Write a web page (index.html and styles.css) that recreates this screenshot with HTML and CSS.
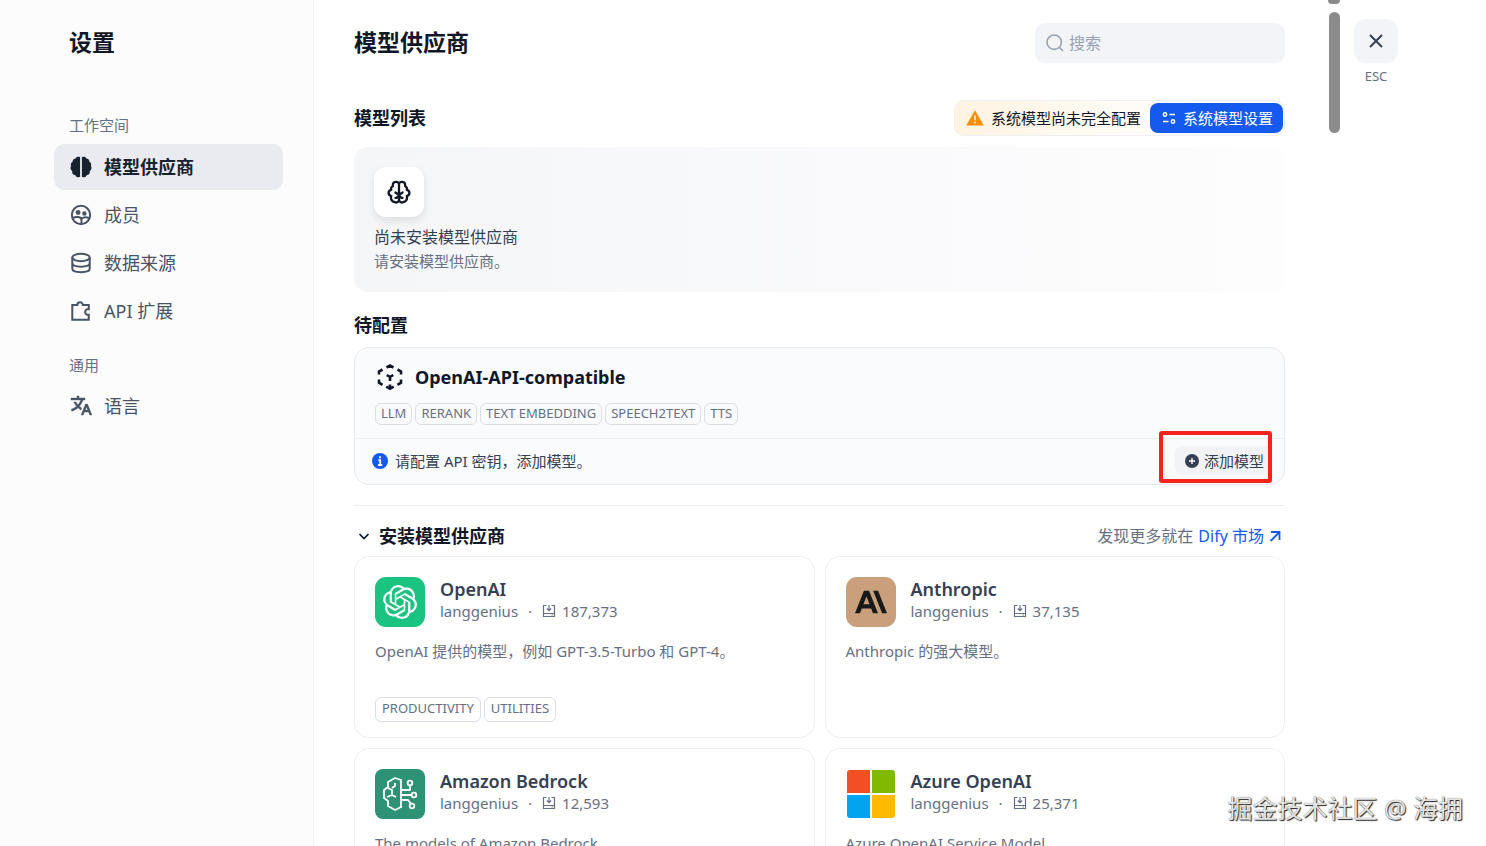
FILE: index.html
```html
<!DOCTYPE html>
<html lang="zh-CN">
<head>
<meta charset="utf-8">
<meta name="viewport" content="width=device-width, initial-scale=1">
<title>设置</title>
<link rel="stylesheet" href="styles.css">
</head>
<body>
<svg class="defs" aria-hidden="true">
  <symbol id="install" viewBox="0 0 14 14"><path d="M4.500 1.500H1.500V12.500H12.500V1.500H9.500M1.500 9.500H12.500M7 1V6.500M4.800 4.500L7 6.700L9.200 4.500M9.500 11H10.800" fill="none" stroke="currentColor" stroke-width="1.200"/></symbol>
</svg>
<div class="app">
  <aside class="sidebar">
    <h1 class="title">设置</h1>
    <nav class="nav">
      <p class="nav-label">工作空间</p>
      <a class="nav-item active" href="#provider" aria-current="page">
        <svg class="nav-icon" viewBox="0 0 24 24" fill="currentColor"><path d="M11 1.300V22.700C9.500 23.600 6.500 23.500 5.600 20.600C3.400 20.600 2 18.700 2.500 16.500C.4 15.200 0 12.500 1.200 11C.3 8.800 1.200 7 2.900 6.200C2.700 4 4.300 2.800 5.800 3C6.800 .8 9.600 .3 11 1.300ZM13 1.300C14.400 .3 17.200 .8 18.200 3C19.700 2.800 21.300 4 21.100 6.200C22.800 7 23.700 8.800 22.800 11C24 12.500 23.600 15.200 21.500 16.500C22 18.700 20.600 20.600 18.400 20.600C17.500 23.500 14.500 23.600 13 22.700Z"/></svg>
        模型供应商</a>
      <a class="nav-item" href="#members">
        <svg class="nav-icon" viewBox="0 0 24 24" fill="none" stroke="currentColor" stroke-width="2.200"><circle cx="12" cy="12" r="10"/><path d="M3 15.500C6 13.500 12 13.500 12.500 17V22M12.500 16C15 14 18 14 21 15.500"/><circle cx="8.800" cy="9.200" r="1.600" fill="currentColor"/><circle cx="15.700" cy="10.300" r="1.300" fill="currentColor"/></svg>
        成员</a>
      <a class="nav-item" href="#data">
        <svg class="nav-icon" viewBox="0 0 24 24" fill="none" stroke="currentColor" stroke-width="2.200"><ellipse cx="12" cy="6" rx="9.500" ry="4"/><path d="M2.500 6V18C2.500 23.300 21.500 23.300 21.500 18V6M2.500 12C2.500 17.300 21.500 17.300 21.500 12"/></svg>
        数据来源</a>
      <a class="nav-item" href="#api">
        <svg class="nav-icon" viewBox="0 0 24 24" fill="none" stroke="currentColor" stroke-width="2.200"><path d="M2.500 5.500H8A3 3 0 1 1 14 5.500H20.500V10A3.200 3.200 0 1 0 20.500 16.200V21.500H2.500Z"/></svg>
        API 扩展</a>
      <p class="nav-label general">通用</p>
      <a class="nav-item" href="#language">
        <svg class="nav-icon" viewBox="1 1 22 22" fill="currentColor" stroke="currentColor" stroke-width=".4"><path d="M18.500 10L22.900 21H20.745L19.544 18H15.454L14.255 21H12.101L16.500 10H18.500ZM10 2V4H16V6L14.032 6C13.243 8.366 11.999 10.506 10.412 12.301C11.134 12.946 11.917 13.518 12.748 14.008L11.997 15.886C10.924 15.278 9.919 14.552 9 13.725C7.214 15.332 5.109 16.555 2.799 17.273L2.263 15.344C4.239 14.720 6.045 13.674 7.590 12.302C6.463 11.028 5.509 9.580 4.767 8H7.007C7.570 9.039 8.240 10.003 9 10.877C10.228 9.465 11.221 7.816 11.910 6H2V4H8V2H10ZM17.500 12.885L16.253 16H18.745L17.500 12.885Z"/></svg>
        语言</a>
    </nav>
  </aside>

  <main class="main">
    <header class="page-head">
      <h2 class="title">模型供应商</h2>
      <label class="search">
        <svg class="icon-18" viewBox="0 0 18 18" fill="none" stroke="currentColor" stroke-width="1.600"><circle cx="8.200" cy="8.200" r="7.200"/><path d="M13.300 13.300L17 17"/></svg>
        <input type="text" placeholder="搜索" aria-label="搜索">
      </label>
    </header>

    <div class="list-head">
      <h3 class="section-title">模型列表</h3>
      <div class="notice">
        <svg class="icon-18" viewBox="0 0 18 18"><path d="M9 1.200L17.800 16.500H.2Z" fill="#f79009"/><path d="M9 6.500V11.300M9 12.700V14.300" stroke="#fff6e8" stroke-width="1.600"/></svg>
        <span>系统模型尚未完全配置</span>
        <button class="primary" type="button">
          <svg class="icon-14" viewBox="0 0 14 14" fill="none" stroke="currentColor" stroke-width="1.400"><circle cx="3" cy="3.500" r="1.700"/><path d="M7.500 3.500H13M1 10.500H6.500"/><circle cx="11" cy="10.500" r="1.700"/></svg>
          系统模型设置</button>
      </div>
    </div>

    <section class="empty">
      <div class="empty-icon">
        <svg class="icon-22" viewBox="0 0 24 24" fill="none" stroke="currentColor" stroke-width="2.300" stroke-linecap="round" stroke-linejoin="round"><path d="M12 4.500C12 .8 5.800 .8 5.800 5V6.300C4 7 3.800 8.800 4.200 9.800C.8 10.500 .6 15 4.200 16C3.400 19 5 22 7.500 22C9 23 12 22.500 12 19.500ZM12 4.500C12 .8 18.200 .8 18.200 5V6.300C20 7 20.200 8.800 19.800 9.800C23.200 10.500 23.400 15 19.800 16C20.600 19 19 22 16.500 22C15 23 12 22.500 12 19.500M8.500 12.500C9.500 14 11 14 12 14C13 14 14.500 14 15.500 12.500M8.500 17.800C10 18 11.500 16.500 12 14.500C12.500 16.500 14 18 15.500 17.800"/></svg>
      </div>
      <p class="empty-title">尚未安装模型供应商</p>
      <p class="empty-text">请安装模型供应商。</p>
    </section>

    <h3 class="section-title pending">待配置</h3>
    <section class="provider">
      <div class="provider-body">
        <div class="provider-name">
          <svg class="icon-30" viewBox="-3 -2.500 30 30" fill="none" stroke="currentColor" stroke-width="2.600"><path d="M8.500 3L12 1L15.500 3M1 10V7L4.500 5M19.500 5L23 7V10M1 15V18.200L4.500 20.300M23 15V18.200L19.500 20.300M8.300 22.200L12 24.300L15.700 22.200M12 20V24M8.700 10.500L12 12.500L15.300 10.500M12 12.500V16.500"/></svg>
          <h4>OpenAI-API-compatible</h4>
        </div>
        <ul class="tags">
          <li>LLM</li><li>RERANK</li><li>TEXT EMBEDDING</li><li>SPEECH2TEXT</li><li>TTS</li>
        </ul>
      </div>
      <div class="provider-foot">
        <svg class="icon-16" viewBox="0 0 16 16"><circle cx="8" cy="8" r="8" fill="#155aef"/><path d="M8 3.300V5.200M6.300 7.200H8.200V12M6 12H10.200" stroke="#fff" stroke-width="1.800" fill="none"/></svg>
        <span>请配置 API 密钥，添加模型。</span>
        <div class="add-wrap">
          <button class="add" type="button">
            <svg class="icon-14" viewBox="0 0 14 14"><circle cx="7" cy="7" r="7" fill="#354052"/><path d="M7 4V10M4 7H10" stroke="#fff" stroke-width="1.400"/></svg>
            添加模型</button>
          <div class="highlight"></div>
        </div>
      </div>
    </section>

    <div class="market-head">
      <h3 class="section-title"><button class="toggle" type="button" aria-expanded="true">
        <svg class="icon-20" viewBox="0 0 20 20" fill="none" stroke="currentColor" stroke-width="1.700"><path d="M5.500 8L10 12.500L14.500 8"/></svg>安装模型供应商</button></h3>
      <p class="more">发现更多就在 <a href="#market">Dify 市场<svg class="icon-14" viewBox="0 0 14 14" fill="none" stroke="currentColor" stroke-width="1.800"><path d="M3 3H11.500V11M11.500 3L2.500 12"/></svg></a></p>
    </div>

    <div class="cards">
      <article class="card">
        <header class="card-head">
          <svg class="logo" viewBox="0 0 50 50"><rect width="50" height="50" rx="11" fill="#1bc380"/><g transform="translate(8 8) scale(1.417)" fill="#fff"><path d="M22.2819 9.8211a5.9847 5.9847 0 0 0-.5157-4.9108 6.0462 6.0462 0 0 0-6.5098-2.900A6.0651 6.0651 0 0 0 4.9807 4.1818a5.9847 5.9847 0 0 0-3.9977 2.900 6.0462 6.0462 0 0 0 .7427 7.0966 5.980 5.980 0 0 0 .511 4.9107 6.051 6.051 0 0 0 6.5146 2.9001A5.9847 5.9847 0 0 0 13.2599 24a6.0557 6.0557 0 0 0 5.7718-4.2058 5.9894 5.9894 0 0 0 3.9977-2.9001 6.0557 6.0557 0 0 0-.7475-7.0729zm-9.022 12.6081a4.4755 4.4755 0 0 1-2.8764-1.0408l.1419-.0804 4.7783-2.7582a.7948.7948 0 0 0 .3927-.6813v-6.7369l2.020 1.1686a.071.071 0 0 1 .038.052v5.5826a4.504 4.504 0 0 1-4.4945 4.4944zm-9.6607-4.1254a4.4708 4.4708 0 0 1-.5346-3.0137l.142.0852 4.783 2.7582a.7712.7712 0 0 0 .7806 0l5.8428-3.3685v2.3324a.0804.0804 0 0 1-.0332.0615L9.740 19.9502a4.4992 4.4992 0 0 1-6.1408-1.6464zM2.3408 7.8956a4.485 4.485 0 0 1 2.3655-1.9728V11.600a.7664.7664 0 0 0 .3879.6765l5.8144 3.3543-2.0201 1.1685a.0757.0757 0 0 1-.071 0l-4.8303-2.7865A4.504 4.504 0 0 1 2.3408 7.872zm16.5963 3.8558L13.1038 8.364 15.1192 7.200a.0757.0757 0 0 1 .071 0l4.8303 2.7913a4.4944 4.4944 0 0 1-.6765 8.1042v-5.6772a.790.790 0 0 0-.407-.667zm2.0107-3.0231l-.142-.0852-4.7735-2.7818a.7759.7759 0 0 0-.7854 0L9.409 9.2297V6.8974a.0662.0662 0 0 1 .0284-.0615l4.8303-2.7866a4.4992 4.4992 0 0 1 6.6802 4.660zM8.3065 12.863l-2.020-1.1638a.0804.0804 0 0 1-.038-.0567V6.0742a4.4992 4.4992 0 0 1 7.3757-3.4537l-.142.0805L8.704 5.459a.7948.7948 0 0 0-.3927.6813zm1.0976-2.3654l2.602-1.4998 2.6069 1.4998v2.9994l-2.5974 1.4997-2.6067-1.4997Z"/></g></svg>
          <div><h4>OpenAI</h4><p class="meta"><span>langgenius</span><i>·</i><svg class="icon-14"><use href="#install"/></svg><span>187,373</span></p></div>
        </header>
        <p class="desc">OpenAI 提供的模型，例如 GPT-3.5-Turbo 和 GPT-4。</p>
        <ul class="tags large"><li>PRODUCTIVITY</li><li>UTILITIES</li></ul>
      </article>
      <article class="card">
        <header class="card-head">
          <svg class="logo" viewBox="0 0 50 50"><rect width="50" height="50" rx="11" fill="#ca9f7b"/><g transform="translate(9 9) scale(1.333)" fill="#191918"><path d="M17.304 3.541h-3.672l6.696 16.918H24Zm-10.608 0L0 20.459h3.744l1.370-3.553h7.005l1.369 3.553h3.744L10.536 3.541Zm-.371 10.223 2.291-5.946 2.292 5.946Z"/></g></svg>
          <div><h4>Anthropic</h4><p class="meta"><span>langgenius</span><i>·</i><svg class="icon-14"><use href="#install"/></svg><span>37,135</span></p></div>
        </header>
        <p class="desc">Anthropic 的强大模型。</p>
      </article>
      <article class="card">
        <header class="card-head">
          <svg class="logo" viewBox="0 0 50 50"><rect width="50" height="50" rx="8" fill="#2e9276"/><g fill="none" stroke="#fff" stroke-width="1.800" stroke-linejoin="round"><path d="M26 11L20 9L13 13V18L9 21V29L13 32V37L20 41L26 38ZM26 10V39M13 19L17 21V25M12 28L17 26L21 28M20 14V17L17 19M26 21H35V16M26 26H37M26 31H33L36 35"/><circle cx="35" cy="14" r="2.300"/><circle cx="39" cy="26" r="2.300"/><circle cx="37" cy="37" r="2.300"/></g></svg>
          <div><h4>Amazon Bedrock</h4><p class="meta"><span>langgenius</span><i>·</i><svg class="icon-14"><use href="#install"/></svg><span>12,593</span></p></div>
        </header>
        <p class="desc">The models of Amazon Bedrock.</p>
      </article>
      <article class="card">
        <header class="card-head">
          <svg class="logo" viewBox="0 0 50 50"><path d="M4 1H24V24H1V4A3 3 0 0 1 4 1Z" fill="#f25022"/><path d="M26 1H46A3 3 0 0 1 49 4V24H26Z" fill="#7fba00"/><path d="M1 26H24V49H4A3 3 0 0 1 1 46Z" fill="#00a4ef"/><path d="M26 26H49V46A3 3 0 0 1 46 49H26Z" fill="#ffb900"/></svg>
          <div><h4>Azure OpenAI</h4><p class="meta"><span>langgenius</span><i>·</i><svg class="icon-14"><use href="#install"/></svg><span>25,371</span></p></div>
        </header>
        <p class="desc">Azure OpenAI Service Model.</p>
      </article>
    </div>
  </main>

  <div class="scrollbar"><div class="scroll-cap"></div><div class="scroll-thumb"></div></div>
  <div class="close-col">
    <button class="close" type="button" aria-label="关闭">
      <svg class="icon-14" viewBox="0 0 14 14" fill="none" stroke="currentColor" stroke-width="2"><path d="M1 1L13 13M13 1L1 13"/></svg>
    </button>
    <span>ESC</span>
  </div>
</div>
<div class="watermark">掘金技术社区 @ 海拥</div>
</body>
</html>
```
FILE: styles.css
```css
* { box-sizing: border-box; }

body {
  margin: 0;
  overflow: hidden;
  background: #fff;
  color: #101828;
  font-family: "Noto Sans", "Noto Sans CJK SC", sans-serif;
  font-size: 15px;
  line-height: 20px;
}

h1, h2, h3, h4, p, ul { margin: 0; padding: 0; }
ul { list-style: none; }
a { color: inherit; text-decoration: none; }
button, input { font: inherit; color: inherit; border: 0; }
button { cursor: pointer; }
svg { flex: none; display: block; }

.defs { display: none; }
.icon-14 { width: 14px; height: 14px; }
.icon-16 { width: 16px; height: 16px; }
.icon-18 { width: 18px; height: 18px; }
.icon-20 { width: 20px; height: 20px; }
.icon-22 { width: 24px; height: 24px; }
.icon-30 { width: 30px; height: 30px; }

.app { display: flex; height: 100vh; }

.title { font-size: 23px; line-height: 38px; font-weight: 700; }
.section-title { font-size: 18px; line-height: 24px; font-weight: 700; }

/* Sidebar */
.sidebar {
  flex: none;
  width: 314px;
  padding: 23px 30px 0 54px;
  background: #fcfcfd;
  border-right: 1px solid #f2f3f5;
}
.sidebar .title { padding-left: 15px; }
.nav { display: flex; flex-direction: column; gap: 2px; padding-top: 54px; }
.nav-label { padding: 0 15px; margin-bottom: 7px; color: #676f83; }
.nav-label.general { margin-top: 19px; margin-bottom: 6px; }
.nav-item {
  display: flex;
  align-items: center;
  gap: 12px;
  height: 46px;
  padding: 0 16px;
  border-radius: 10px;
  color: #495464;
  font-size: 18px;
}
.nav-item.active { background: #e9ebf0; color: #18222f; font-weight: 700; }
.nav-icon { width: 22px; height: 22px; }

/* Main column */
.main { flex: 1; min-width: 0; padding: 23px 43px 0 40px; overflow: hidden; }
.page-head, .list-head, .market-head { display: flex; align-items: center; justify-content: space-between; }
.page-head { align-items: flex-start; }
.search {
  display: flex;
  align-items: center;
  gap: 5px;
  width: 250px;
  height: 40px;
  padding: 0 11px;
  border-radius: 10px;
  background: #f2f4f7;
  color: #98a2b2;
}
.search input { flex: 1; min-width: 0; padding: 0; background: none; outline: 0; font-size: 16px; }
.search input::placeholder { color: #98a2b2; opacity: 1; }

.list-head { margin-top: 37px; }
.notice {
  display: flex;
  align-items: center;
  gap: 7px;
  padding: 2px 1px 2px 11px;
  border: 1px solid #f0f0f2;
  border-radius: 10px;
  background: linear-gradient(90deg, #fff3e2, #fff 75%);
}
.notice .primary { margin-left: 2px; }
.primary {
  display: flex;
  align-items: center;
  gap: 7px;
  height: 30px;
  padding: 0 10px 0 12px;
  border-radius: 8px;
  background: #155aef;
  color: #fff;
}

.empty {
  margin-top: 11px;
  padding: 20px 20px 19px;
  border-radius: 14px;
  background: linear-gradient(90deg, #f5f6f8, #fdfdfe);
}
.empty-icon {
  display: grid;
  place-items: center;
  width: 50px;
  height: 50px;
  border-radius: 12px;
  background: #fff;
  box-shadow: 0 4px 8px #1018281a;
}
.empty-title { margin-top: 8px; font-size: 16px; line-height: 24px; color: #354052; }
.empty-text { line-height: 24px; color: #676f83; }

.pending { margin-top: 21px; }
.provider { margin-top: 10px; border: 1px solid #e6e9ee; border-radius: 15px; background: #fafbfd; }
.provider-body { padding: 14px 20px 13px; }
.provider-name { display: flex; align-items: center; gap: 10px; color: #101828; }
.provider-name h4 { font-size: 18px; line-height: 24px; font-weight: 700; }
.tags { display: flex; gap: 3px; margin-top: 11px; font-size: 13px; line-height: 18px; color: #676f83; }
.tags li { padding: 0 5px 2px; border: 1px solid #dadee5; border-radius: 6px; }
.tags.large { margin-top: auto; }
.tags.large li { padding: 1px 6px 4px; }
.provider-foot {
  display: flex;
  align-items: center;
  gap: 7px;
  padding: 7px 12px 9px 17px;
  border-top: 1px solid #eceef2;
  color: #354052;
}
.add-wrap { position: relative; margin-left: auto; }
.add {
  display: flex;
  align-items: center;
  gap: 5px;
  height: 29px;
  padding: 0 8px 0 10px;
  border-radius: 8px;
  background: #f1f3f6;
  color: #354052;
}
.highlight {
  position: absolute;
  inset: -15px 0 -8px -16px;
  border: 4px solid #f5231b;
  border-radius: 3px;
  pointer-events: none;
}

.market-head { margin-top: 20px; padding: 18px 3px 8px 0; border-top: 1px solid #eceef2; }
.toggle { display: flex; align-items: center; gap: 5px; padding: 0; background: none; }
.more { display: flex; gap: 5px; font-size: 16px; line-height: 24px; color: #676f83; }
.more a { display: flex; align-items: center; gap: 4px; color: #155aef; }

.cards { display: grid; grid-template-columns: 1fr 1fr; grid-auto-rows: 182px; gap: 10px; }
.card {
  display: flex;
  flex-direction: column;
  min-width: 0;
  padding: 20px 20px 15px;
  border: 1px solid #eceef1;
  border-radius: 15px;
}
.card-head { display: flex; gap: 15px; }
.logo { width: 50px; height: 50px; }
.card h4 { font-size: 18px; line-height: 24px; font-weight: 600; color: #354052; }
.meta { display: flex; align-items: center; line-height: 20px; color: #676f83; }
.meta i { width: 24px; text-align: center; font-style: normal; }
.meta svg { margin-right: 6px; }
.desc { margin-top: 14px; line-height: 20px; color: #676f83; }

/* Right edge */
.scrollbar { flex: none; width: 12px; }
.scroll-cap { height: 4px; border-radius: 0 0 5px 5px; background: #8b8b8b; }
.scroll-thumb { width: 11px; height: 121px; margin: 8px 0 0 1px; border-radius: 6px; background: #8b8b8b; }
.close-col {
  display: flex;
  flex: none;
  flex-direction: column;
  align-items: center;
  width: 146px;
  padding: 19px 74px 0 0;
  color: #676f83;
  font-size: 13px;
}
.close {
  display: grid;
  place-items: center;
  width: 44px;
  height: 44px;
  margin-bottom: 3px;
  border-radius: 12px;
  background: #f2f4f7;
  color: #354052;
}

.watermark {
  position: absolute;
  right: 23px;
  bottom: 21px;
  color: #e4e4e4;
  font-size: 25px;
  line-height: 34px;
  text-shadow: 1px 1px 1px #222, 0 0 1px #666;
}
```
